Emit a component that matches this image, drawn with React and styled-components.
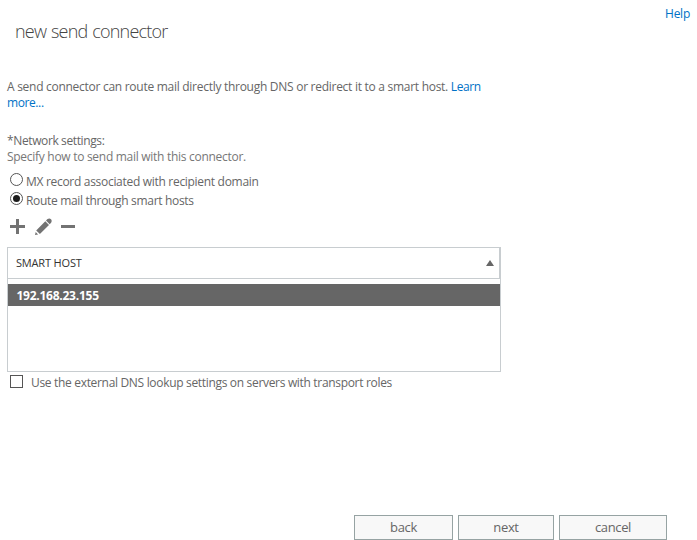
import React from "react";
import styled, { createGlobalStyle } from "styled-components";

const GlobalStyle = createGlobalStyle`
  * { box-sizing: border-box; }
  body { margin: 0; background: #fff; }
`;

const Page = styled.div`
  width: 697px;
  height: 540px;
  overflow: hidden;
  display: flex;
  flex-direction: column;
  font-family: "Open Sans", "Noto Sans", sans-serif;
  font-size: 12px;
  line-height: 16px;
  color: #666;
  white-space: nowrap;
`;

const TopBar = styled.header`
  display: flex;
  justify-content: space-between;
  height: 79px;
  padding: 6px 7px 0 15px;
`;

const Title = styled.h1`
  margin: 12px 0 0;
  font-size: 18px;
  font-weight: 300;
  line-height: 26px;
  letter-spacing: -0.8px;
  word-spacing: 1px;
  color: #444;
`;

const Link = styled.a`
  color: #0072c6;
  text-decoration: none;
  cursor: pointer;
`;

const Text = styled.span`
  letter-spacing: ${(p) => p.$spacing || 0}px;
`;

const Content = styled.main`
  width: 501px;
  padding-left: 7px;
  display: flex;
  flex-direction: column;
`;

const Intro = styled.p`
  margin: 0 0 22px;
`;

const Hint = styled.div`
  color: #777;
`;

const RadioRow = styled.label`
  display: flex;
  height: 19px;
  padding-left: 3px;
  gap: 3px;

  &:first-of-type { margin-top: 7px; }

  ${Text} { margin-top: 2px; }
`;

const RadioMark = styled.span`
  width: 13px;
  height: 13px;
  margin-top: 1px;
  display: grid;
  place-items: center;
  border: 1px solid #555;
  border-radius: 50%;

  &::after {
    content: "";
    width: 7px;
    height: 7px;
    border-radius: 50%;
    background: ${(p) => (p.$checked ? "#1c1c1c" : "transparent")};
  }
`;

const Toolbar = styled.div`
  display: flex;
  height: 37px;
  padding: 8px 0 0 2px;
  gap: 9px;

  svg { display: block; fill: #737373; }
`;

const Grid = styled.div`
  width: 494px;
  height: 125px;
  border: 1px solid #c8cdd0;
`;

const GridHeader = styled.div`
  display: flex;
  align-items: center;
  justify-content: space-between;
  height: 31px;
  padding: 0 5px 0 8px;
  border-bottom: 1px solid #c8cdd0;
  border-right: 1px solid #c8cdd0;
  font-size: 11px;
  color: #333;
`;

const SelectedRow = styled.div`
  height: 22px;
  margin-top: 5px;
  padding-left: 8.5px;
  background: #666;
  color: #fff;
  font-weight: 700;
  line-height: 23px;
`;

const CheckRow = styled.label`
  display: flex;
  gap: 8px;
  padding: 3px 0 0 3px;
`;

const CheckBox = styled.span`
  width: 13px;
  height: 13px;
  border: 1px solid #555;
`;

const Footer = styled.footer`
  display: flex;
  gap: 5px;
  margin-top: auto;
  padding-left: 354px;
`;

const Button = styled.button`
  width: ${(p) => p.$width}px;
  height: 25px;
  padding: 0 0 1px;
  border: 1px solid #96a3a3;
  background: #f8f8f8;
  color: #666;
  font: inherit;
  font-size: 13px;
  letter-spacing: -0.35px;
`;

export default function App() {
  return (
    <Page>
      <GlobalStyle />
      <TopBar>
        <Title>new send connector</Title>
        <Link><Text $spacing={-0.25}>Help</Text></Link>
      </TopBar>
      <Content>
        <Intro>
          <Text $spacing={-0.277}>A send connector can route mail directly through DNS or redirect it to a smart host. </Text>
          <Link><Text $spacing={-0.4}>Learn<br />more...</Text></Link>
        </Intro>
        <div><Text $spacing={-0.38}>*Network settings:</Text></div>
        <Hint><Text $spacing={-0.285}>Specify how to send mail with this connector.</Text></Hint>
        <RadioRow>
          <RadioMark />
          <Text $spacing={-0.3}>MX record associated with recipient domain</Text>
        </RadioRow>
        <RadioRow>
          <RadioMark $checked />
          <Text $spacing={-0.32}>Route mail through smart hosts</Text>
        </RadioRow>
        <Toolbar>
          <svg width="17" height="17" viewBox="0 0 17 17">
            <path d="M7 1h3v6h6v3h-6v6H7v-6H1V7h6z" />
          </svg>
          <svg width="17" height="17" viewBox="0 0 17 17">
            <path d="M0 17l.7-3 2.400 2.400zM1.200 12.400L10.300 3.300l3.700 3.700-9.100 9.100zM11 2.600l1.500-1.500q1.900-1.300 3.500.1 1.300 1.600.1 3.500L14.700 6.300z" />
          </svg>
          <svg width="16" height="17" viewBox="0 0 16 17">
            <path d="M0 7h14v3H0z" />
          </svg>
        </Toolbar>
        <Grid>
          <GridHeader>
            <Text $spacing={-0.17}>SMART HOST</Text>
            <svg width="8" height="6" viewBox="0 0 8 6"><path d="M4 0l4 6H0z" fill="#666" /></svg>
          </GridHeader>
          <SelectedRow><Text $spacing={-0.25}>192.168.23.155</Text></SelectedRow>
        </Grid>
        <CheckRow>
          <CheckBox />
          <Text $spacing={-0.32}>Use the external DNS lookup settings on servers with transport roles</Text>
        </CheckRow>
      </Content>
      <Footer>
        <Button $width={99}>back</Button>
        <Button $width={96}>next</Button>
        <Button $width={108}>cancel</Button>
      </Footer>
    </Page>
  );
}
